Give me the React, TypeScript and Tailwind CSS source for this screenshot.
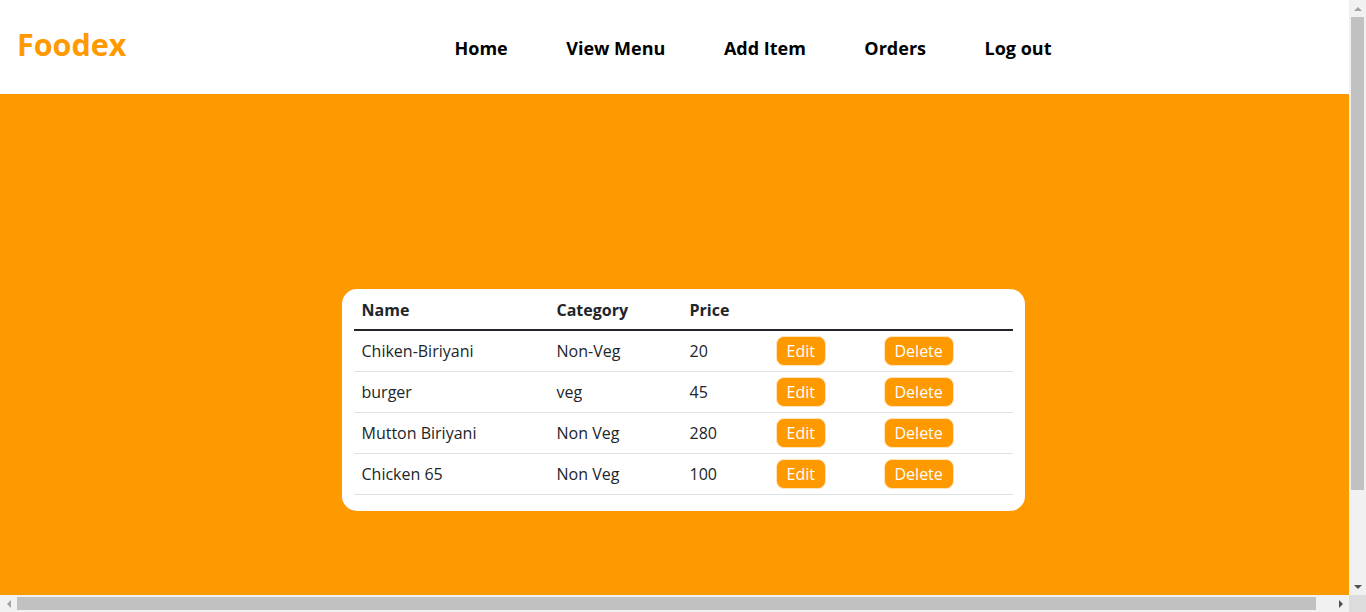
const items = [
  { name: "Chiken-Biriyani", category: "Non-Veg", price: 20 },
  { name: "burger", category: "veg", price: 45 },
  { name: "Mutton Biriyani", category: "Non Veg", price: 280 },
  { name: "Chicken 65", category: "Non Veg", price: 100 },
]

const links = ["Home", "View Menu", "Add Item", "Orders", "Log out"]

// browser scrollbars seen in the screenshot
function Scrollbars() {
  return (
    <>
      <div className="fixed top-0 right-0 flex h-[595px] w-[17px] flex-col items-center bg-[#f1f1f1]">
        <div className="flex h-[17px] items-center justify-center">
          <div className="h-0 w-0 border-x-[4px] border-b-[4px] border-x-transparent border-b-[#a3a3a3]" />
        </div>
        <div className="h-[473px] w-[13px] bg-[#c1c1c1]" />
        <div className="flex-1" />
        <div className="flex h-[17px] items-center justify-center">
          <div className="h-0 w-0 border-x-[4px] border-t-[4px] border-x-transparent border-t-[#505050]" />
        </div>
      </div>
      <div className="fixed bottom-0 left-0 flex h-[17px] w-[1349px] items-center bg-[#f1f1f1]">
        <div className="flex w-[17px] items-center justify-center">
          <div className="h-0 w-0 border-y-[4px] border-r-[4px] border-y-transparent border-r-[#a3a3a3]" />
        </div>
        <div className="h-[13px] w-[1299px] bg-[#c1c1c1]" />
        <div className="flex-1" />
        <div className="flex w-[17px] items-center justify-center">
          <div className="h-0 w-0 border-y-[4px] border-l-[4px] border-y-transparent border-l-[#505050]" />
        </div>
      </div>
      <div className="fixed right-0 bottom-0 h-[17px] w-[17px] bg-[#dcdcdc]" />
    </>
  )
}

export default function App() {
  return (
    <div className="w-screen font-['Open_Sans',sans-serif] text-[#212529]">
      {/* Navbar */}
      <header className="flex h-[94px] items-center bg-white">
        <span className="mb-[4px] ml-[17px] text-[30.5px] font-bold text-[#ff9900]">Foodex</span>
        <ul className="mt-[2px] ml-[328px] flex gap-[58.5px] text-[18px] font-bold text-black">
          {links.map((l) => (
            <li key={l}>
              <a href="#">{l}</a>
            </li>
          ))}
        </ul>
      </header>

      {/* Menu table */}
      <section className="flex h-screen items-center justify-center bg-[#ff9900]">
        <div className="w-[683px] rounded-[15px] bg-white px-3 pt-3 pb-4">
          <table className="w-full border-collapse text-left text-[16px]">
            <thead>
              <tr className="border-b-2 border-[#212529]">
                <th className="h-[29px] w-[195px] px-2 py-0 align-top leading-[18px] font-bold">Name</th>
                <th className="h-[29px] w-[133px] px-2 py-0 align-top leading-[18px] font-bold">Category</th>
                <th className="h-[29px] w-[86px] px-2 py-0 align-top leading-[18px] font-bold">Price</th>
                <th className="h-[29px] w-[108px] px-2 py-0"></th>
                <th className="h-[29px] px-2 py-0"></th>
              </tr>
            </thead>
            <tbody>
              {items.map((it) => (
                <tr key={it.name} className="border-b border-[#dee2e6]">
                  <td className="h-[41px] px-2">{it.name}</td>
                  <td className="h-[41px] px-2">{it.category}</td>
                  <td className="h-[41px] px-2">{it.price}</td>
                  <td className="h-[41px] px-2">
                    <button className="h-[30px] rounded-lg border border-[#ffe3bd] bg-[#ff9900] px-[10px] text-white">
                      Edit
                    </button>
                  </td>
                  <td className="h-[41px] px-2">
                    <button className="h-[30px] rounded-lg border border-[#ffe3bd] bg-[#ff9900] px-[10px] text-white">
                      Delete
                    </button>
                  </td>
                </tr>
              ))}
            </tbody>
          </table>
        </div>
      </section>

      <Scrollbars />
    </div>
  )
}
